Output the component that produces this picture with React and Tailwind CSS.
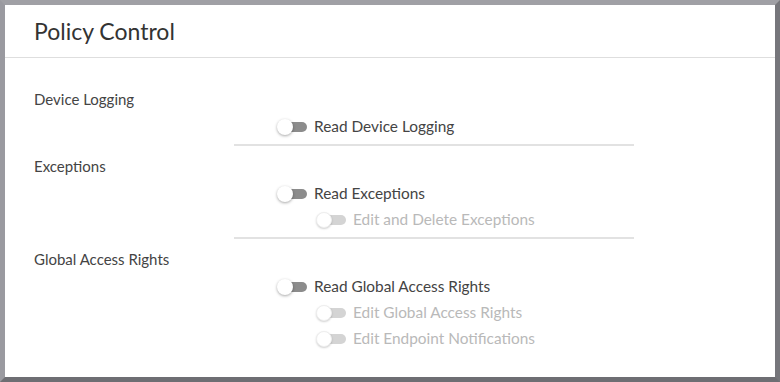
import React from "react";

const Toggle = ({ disabled }) => {
  return (
    <span className="relative inline-block w-[30px] h-[18px] shrink-0">
      <span
        className={`absolute left-[5px] right-0 top-[4px] h-[10px] rounded-full ${
          disabled ? "bg-[#d4d4d4]" : "bg-[#8c8c8c]"
        }`}
      />
      <span
        className={`absolute left-0 top-[1px] w-[16px] h-[16px] rounded-full bg-white ${
          disabled
            ? "shadow-[0_1px_2px_rgba(0,0,0,0.18)] border border-[#eee]"
            : "shadow-[0_1px_3px_rgba(0,0,0,0.35)]"
        }`}
      />
    </span>
  );
};

const PermRow = ({ label, sub, disabled }) => {
  return (
    <div className={`flex items-center h-[26px] gap-[7px] ${sub ? "pl-[39px]" : ""}`}>
      <Toggle disabled={disabled} />
      <span className={`text-[15.4px] ${disabled ? "text-[#b9b9b9]" : "text-[#444]"}`}>
        {label}
      </span>
    </div>
  );
};

const Section = ({ title, rows, divider, first }) => {
  return (
    <div className={first ? "" : "mt-[9px]"}>
      <div className="h-[22px] leading-[22px] text-[15px] text-[#444]">{title}</div>
      <div className="mt-[4px] ml-[200px] w-[400px]">
        <div className="pl-[43px]">
          {rows.map((r) => (
            <PermRow key={r.label} label={r.label} sub={r.sub} disabled={r.sub} />
          ))}
        </div>
        {divider && <div className="mt-[4px] h-[2px] bg-[#e2e2e2]" />}
      </div>
    </div>
  );
};

const sections = [
  {
    title: "Device Logging",
    rows: [{ label: "Read Device Logging" }],
    divider: true,
  },
  {
    title: "Exceptions",
    rows: [{ label: "Read Exceptions" }, { label: "Edit and Delete Exceptions", sub: true }],
    divider: true,
  },
  {
    title: "Global Access Rights",
    rows: [
      { label: "Read Global Access Rights" },
      { label: "Edit Global Access Rights", sub: true },
      { label: "Edit Endpoint Notifications", sub: true },
    ],
    divider: false,
  },
];

export default function App() {
  return (
    <div
      className="w-[780px] h-[382px] border-[5px] border-t-[#a0a0a5] border-l-[#9a9aa0] border-r-[#76767b] border-b-[#6e6e73] bg-white overflow-hidden"
      style={{ fontFamily: "Lato, 'Open Sans', sans-serif" }}
    >
      <div className="h-[53px] border-b border-[#dedede] flex items-center px-[29px]">
        <h1 className="text-[23px] text-[#333] font-normal">Policy Control</h1>
      </div>
      <div className="pt-[30px] px-[29px]">
        {sections.map((s, i) => (
          <Section key={s.title} {...s} first={i === 0} />
        ))}
      </div>
    </div>
  );
}
